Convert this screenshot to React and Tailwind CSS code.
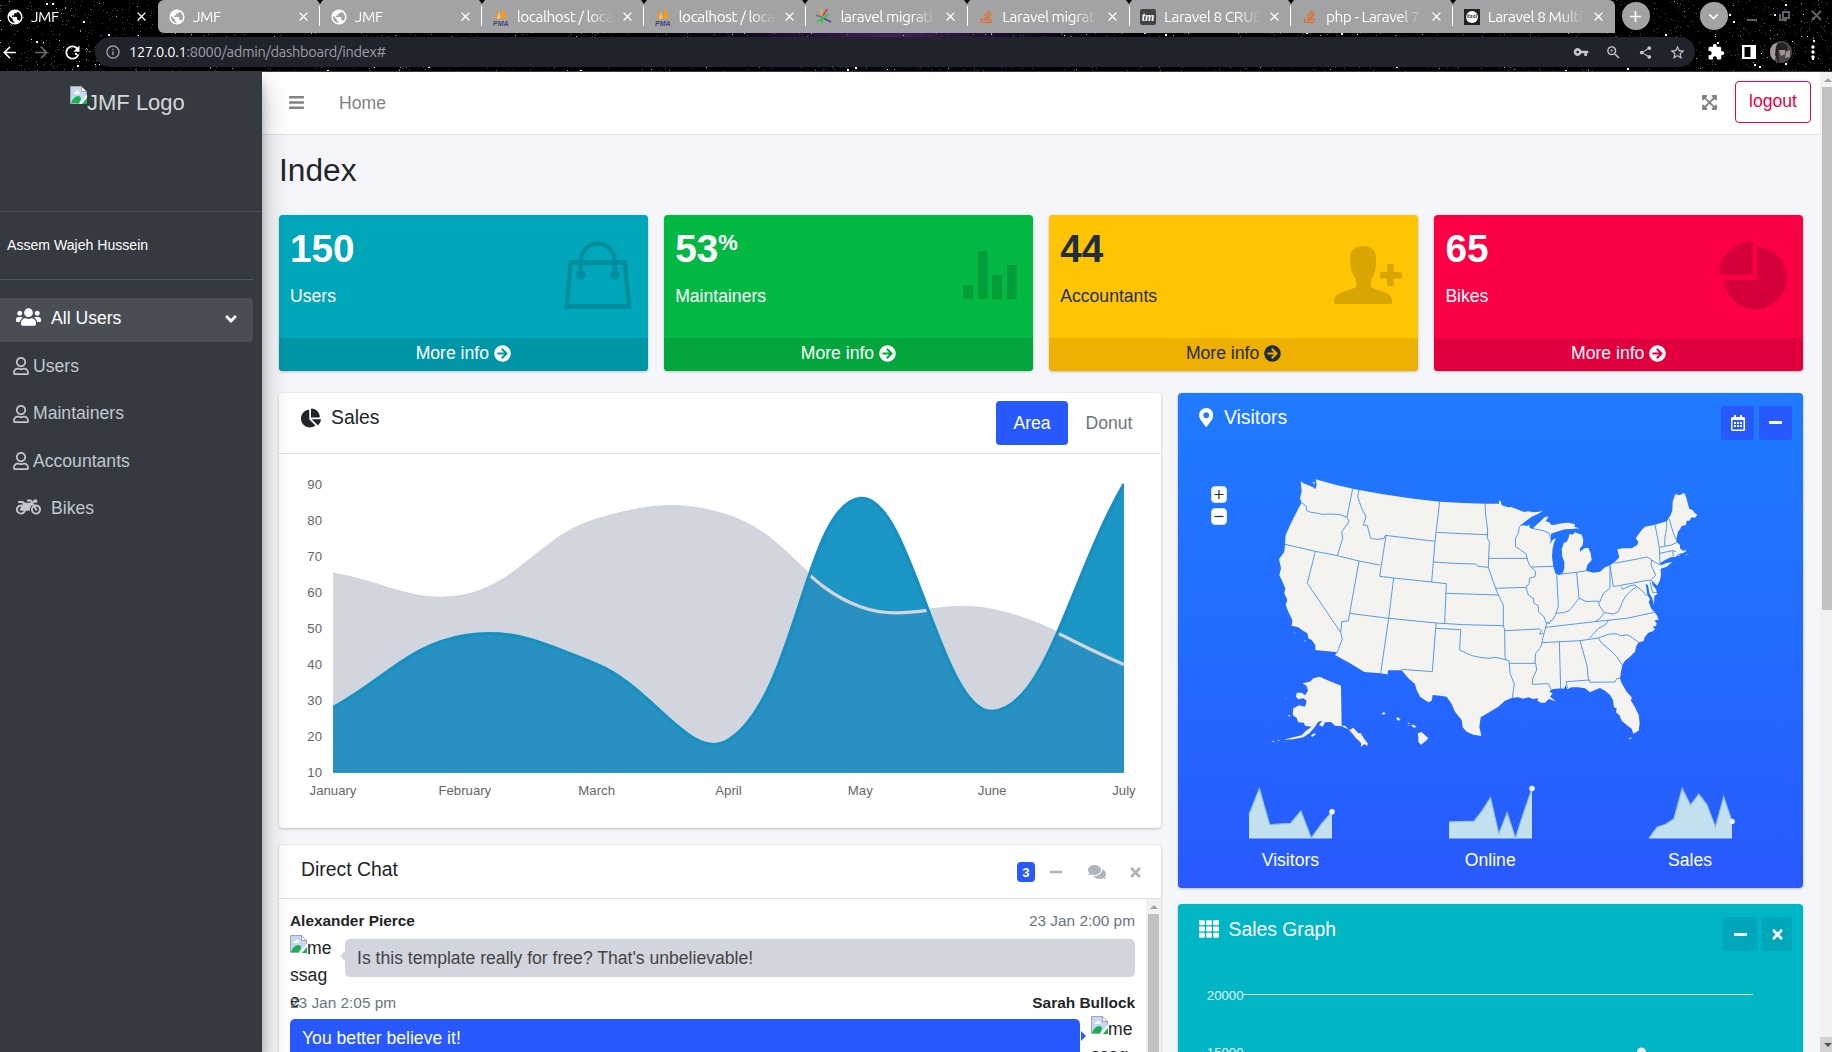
import React from "react";
import {
  FaUsers, FaRegUser, FaMotorcycle, FaAngleDown, FaBars, FaExpandArrowsAlt, FaArrowCircleRight,
  FaChartPie, FaMapMarkerAlt, FaRegCalendarAlt, FaMinus, FaTimes, FaTh, FaComments, FaStackOverflow,
} from "react-icons/fa";
import {
  MdArrowBack, MdArrowForward, MdRefresh, MdInfoOutline, MdVpnKey, MdZoomIn, MdShare, MdStarBorder,
  MdExtension, MdClose, MdAdd, MdPublic, MdMoreVert, MdKeyboardArrowDown,
} from "react-icons/md";

/* ---------- browser chrome ---------- */

function makeStars() {
  let seed = 7;
  const rnd = () => {
    seed = (seed * 1103515245 + 12345) % 2147483648;
    return seed / 2147483648;
  };
  const tones = ["#ffffff", "#9fb4c4", "#5c6670", "#3a4450", "#2c3a44", "#1f4a48", "#444a55"];
  return Array.from({ length: 4200 }, () => {
    const x = Math.floor(rnd() * 1832);
    const y = Math.floor(rnd() * 71);
    const k = rnd();
    const t = k < 0.05 ? 0 : k < 0.13 ? 1 : 2 + Math.floor(rnd() * 5);
    return { x, y, s: k < 0.03 ? 2 : 1, c: tones[t] };
  });
}
const STARS = makeStars();

function Starfield() {
  return (
    <svg className="absolute inset-0" width="1832" height="71">
      <defs>
        <radialGradient id="nebula">
          <stop offset="0" stopColor="#5a2a78" stopOpacity="0.8" />
          <stop offset="1" stopColor="#1a1040" stopOpacity="0" />
        </radialGradient>
      </defs>
      <ellipse cx="890" cy="38" rx="260" ry="40" fill="url(#nebula)" />
      {STARS.map((s, i) => (
        <rect key={i} x={s.x} y={s.y} width={s.s} height={s.s} fill={s.c} />
      ))}
    </svg>
  );
}

const PmaIcon = () => (
  <svg width="16" height="18" viewBox="0 0 16 18">
    <path d="M5 1 L6 10 L1 11 Q4 7 5 1Z M9 0 Q13 5 14 10 L8 10 Q9.500 5 9 0Z" fill="#f89c0e" />
    <path d="M6.500 3 L7.500 10.500 L4 11Z" fill="#fbc17b" />
    <text x="0" y="17.500" fontSize="7" fontWeight="700" fontStyle="italic" fill="#4b3f7d" fontFamily="Liberation Sans, sans-serif" textLength="15.500">PMA</text>
  </svg>
);
const LaravelIoIcon = () => (
  <svg width="16" height="16" viewBox="0 0 16 16" fill="none" strokeWidth="1.700">
    <path d="M5 8 L0 6" stroke="#9b59b6" />
    <path d="M6 7 L5 0" stroke="#f1b62e" />
    <path d="M7 7 L11 0" stroke="#e8315b" />
    <path d="M5 8 L15 13" stroke="#6b3fa0" />
    <path d="M1 13 L13 5 M6 8 L6 14" stroke="#2ecc40" />
  </svg>
);
const TmIcon = () => (
  <span className="flex h-4 w-4 items-center justify-center rounded-[2px] bg-[#444] text-[12px] font-bold italic leading-none text-white [font-family:'Liberation_Serif',serif]">tm</span>
);
const BadgeIcon = () => (
  <span className="flex h-4 w-4 items-center justify-center bg-[#222]">
    <span className="flex h-3 w-3 items-center justify-center rounded-full bg-white text-[5px] font-bold leading-none text-[#222]">itsol</span>
  </span>
);
const Globe = () => <MdPublic size={18} className="-m-px text-white" />;
const So = () => <FaStackOverflow size={15} className="text-[#f2641c]" />;

const TABS = [
  ["JMF", Globe], ["JMF", Globe], ["localhost / loca", PmaIcon], ["localhost / loca", PmaIcon],
  ["laravel migrati", LaravelIoIcon], ["Laravel migrat", So], ["Laravel 8 CRUD", TmIcon],
  ["php - Laravel 7", So], ["Laravel 8 Multi", BadgeIcon],
];

function TabInner({ label, Icon }) {
  return (
    <>
      <span className="flex w-4 shrink-0 items-center justify-center"><Icon /></span>
      <span className="ml-2 w-[98px] shrink-0 overflow-hidden whitespace-nowrap text-[15.400px] leading-[22px] tracking-[-0.450px] text-white [mask-image:linear-gradient(to_right,#000_74%,transparent_99%)]">{label}</span>
      <MdClose size={15} className="ml-[5px] shrink-0 text-white" />
    </>
  );
}

function BrowserChrome() {
  return (
    <header className="relative h-[72px] shrink-0 overflow-hidden bg-black [font-family:Ubuntu,'Open_Sans',sans-serif]">
      <Starfield />
      <div className="relative flex h-[33px]">
        <div className="flex w-[158px] items-center pl-[7px]">
          <TabInner label="JMF" Icon={Globe} />
        </div>
        <div className="flex h-[33px] overflow-hidden rounded-bl-[6px] rounded-tl-[6px] rounded-tr-[6px] bg-[#a2a3a4]">
          {TABS.map(([label, Icon], i) => (
            <div key={i} className="relative flex w-[161.850px] items-center pl-[11px]">
              <TabInner label={label} Icon={Icon} />
              {i < 8 && <span className="absolute right-[-0.5px] top-[6px] h-5 w-px bg-white" />}
              {i < 8 && <span className="absolute -right-[3px] top-0 border-x-[3px] border-t-4 border-x-transparent border-t-black" />}
            </div>
          ))}
        </div>
        <div className="ml-[7px] mt-0.5 flex h-7 w-7 items-center justify-center rounded-full bg-[#a2a3a4] text-white"><MdAdd size={19} /></div>
        <div className="ml-[50px] mt-0.5 flex h-7 w-7 items-center justify-center rounded-full bg-[#a2a3a4] text-white"><MdKeyboardArrowDown size={19} /></div>
        <svg className="ml-3" width="92" height="32" fill="none" stroke="#5e6266" strokeWidth="2">
          <path d="M7 20H17M40 14V20H47M43 12H49V18H43ZM72 11L81 20M81 11L72 20" />
        </svg>
      </div>
      <div className="relative mt-1 flex h-[30px] items-center text-white">
        <div className="flex w-[95px] items-center">
          <MdArrowBack size={19} className="shrink-0" />
          <MdArrowForward size={19} className="ml-[13px] shrink-0 text-[#6d6d6d]" />
          <MdRefresh size={21} className="ml-[11px] shrink-0" />
        </div>
        <div className="flex h-[30px] w-[1600px] items-center rounded-full bg-[#20232c] pl-[10px] pr-[9px] text-[#9aa0a6]">
          <MdInfoOutline size={16} />
          <span className="ml-[8px] text-[14.600px] leading-none tracking-[-0.300px]"><span className="text-white">127.0.0.1</span>:8000/admin/dashboard/index#</span>
          <div className="ml-auto flex items-center gap-4 text-[#c4c6c9]">
            <MdVpnKey size={16} /><MdZoomIn size={17} /><MdShare size={15} /><MdStarBorder size={17} />
          </div>
        </div>
        <MdExtension size={18} className="ml-[12px]" />
        <svg className="ml-[17px]" width="14" height="14"><path d="M0 0H14V14H0Z" fill="#fff" /><path d="M2.500 2V12H8.500V2Z" fill="#000" /></svg>
        <svg className="ml-[14px]" width="22" height="22" viewBox="0 0 22 22">
          <defs><clipPath id="avatar"><circle cx="11" cy="11" r="11" /></clipPath></defs>
          <g clipPath="url(#avatar)">
            <rect width="22" height="22" fill="#4b4648" />
            <path d="M0 4L7 2V14L3 22H0Z" fill="#a09a98" />
            <path d="M6 5Q12 -2 18 6L17 9L8 9L9 22L5 14Z" fill="#232021" />
            <path d="M9 9L15 9L15 13L11 15Z" fill="#a8948e" />
            <path d="M16 11L20 9L20 16L15 17Z" fill="#9c9290" />
          </g>
        </svg>
        <MdMoreVert size={20} className="ml-[11px]" />
      </div>
      <div className="absolute inset-x-0 bottom-0 h-px bg-[#3a363c]" />
    </header>
  );
}

/* ---------- shared bits ---------- */

function BrokenImage() {
  return (
    <svg className="inline-block align-top" width="17" height="18" viewBox="0 0 17 18">
      <path d="M0.500 0.500H11.500L16.500 5.500V17.500H0.500Z" fill="#c5d7f5" stroke="#a3a6aa" />
      <path d="M11.500 0.500V5.500H16.500Z" fill="#fff" stroke="#a3a6aa" />
      <path d="M3.500 8Q3.500 6 5.500 6Q6.500 3.500 8.500 5.500Q10 6 9.500 8Z" fill="#fff" />
      <path d="M1 17Q3 11 8 10Q11 10 11 13L9 17Z" fill="#12b54a" />
      <path d="M9 18L17 8.500V12L12 18Z" fill="#fff" />
      <path d="M12 18L17 12V18Z" fill="#12b54a" />
    </svg>
  );
}

/* ---------- sidebar ---------- */

function NavItem({ children, icon, wide }) {
  return (
    <div className={wide ? "flex h-[47.400px] items-center pl-4 text-[#c2c7d0]" : "flex h-[47.400px] items-center pl-[13px] text-[#c2c7d0]"}>
      {icon}
      <span className={wide ? "ml-[10px]" : "ml-1"}>{children}</span>
    </div>
  );
}

function Sidebar() {
  return (
    <aside className="relative z-10 h-full w-[262px] shrink-0 bg-[#343a40] shadow-[0_14px_28px_rgba(0,0,0,0.25),0_10px_10px_rgba(0,0,0,0.22)]">
      <div className="flex h-[140px] border-b border-[#4b545c] pl-[70px] pt-[14px]">
        <BrokenImage />
        <span className="pt-[4px] text-[22px] leading-[26px] text-[#d6d8d9]">JMF Logo</span>
      </div>
      <div className="flex h-[68px] w-[253px] items-center border-b border-[#4f5962] pl-[7px] text-[14.080px] text-white">Assem Wajeh Hussein</div>
      <nav className="mt-[17.500px] w-[253px]">
        <div className="flex h-[44px] items-center rounded-r bg-[#494d54] pb-[2px] pl-4 text-white">
          <FaUsers className="-mt-[3px] h-5 w-[25px]" />
          <span className="ml-[10px]">All Users</span>
          <FaAngleDown size={18} className="ml-auto mr-[13px]" />
        </div>
        <div className="mt-px">
          <NavItem icon={<FaRegUser className="h-[18px] w-4" />}>Users</NavItem>
          <NavItem icon={<FaRegUser className="h-[18px] w-4" />}>Maintainers</NavItem>
          <NavItem icon={<FaRegUser className="h-[18px] w-4" />}>Accountants</NavItem>
          <NavItem wide icon={<FaMotorcycle className="-mt-[3px] h-5 w-[25px]" />}>Bikes</NavItem>
        </div>
      </nav>
    </aside>
  );
}

/* ---------- small boxes ---------- */

const BagIcon = () => (
  <g>
    <path fillRule="evenodd" d="M6.900 19H65L69.500 68H2.300ZM10.800 24L6.900 63H65L60.400 24Z" />
    <path d="M16.500 34V19.500A19.200 19.200 0 0 1 54.900 19.500V34H50.400V19.500A14.700 14.700 0 0 0 21 19.500V34Z" />
    <circle cx="18.800" cy="34" r="4.800" /><circle cx="52.600" cy="34" r="4.800" />
  </g>
);
const BarsIcon = () => <path d="M16.300 44h10v14.300h-10zM31.100 10h9.500v48.300h-9.500zM45 34h10v24.300H45zM60 24h9.500v34.300H60z" />;
const PersonIcon = () => (
  <path d="M31 5C38 5 44 9 44 16C44 19 43.500 21 44 23C43.500 28 42.500 33 40 37C38.500 40 38.500 43 39 46C45 50 58 50.500 60.200 58V63H2.200V58C4.500 50.500 18 50 24 46C24.500 43 24.500 40 23 37C20 33 19 28 18.200 23C18.600 21 18 19 18 16C18 9 24 5 31 5ZM55.200 23H61.800V31H69.900V37.600H61.800V45H55.200V37.600H48.200V31H55.200Z" />
);
const PieIcon = () => <path d="M36 0.300V33.700H1.900A34 34 0 0 1 36 0.300ZM40.200 5.400A31.400 31.400 0 1 1 7 39H40.200Z" />;

const BOXES = [
  { n: "150", label: "Users", box: "bg-[#00a7bb] text-white", foot: "bg-[#0096a8]", Icon: BagIcon },
  { n: "53", sup: "%", label: "Maintainers", box: "bg-[#03b944] text-white", foot: "bg-[#02a63d]", Icon: BarsIcon },
  { n: "44", label: "Accountants", box: "bg-[#ffc404] text-[#1f2d3d]", foot: "bg-[#edb003]", Icon: PersonIcon },
  { n: "65", label: "Bikes", box: "bg-[#fb0044] text-white", foot: "bg-[#e1003d]", Icon: PieIcon },
];

function SmallBox({ n, sup, label, box, foot, Icon }) {
  return (
    <div className={`relative flex h-[156px] flex-col overflow-hidden rounded-[4px] shadow-[0_0_1px_rgba(0,0,0,0.13),0_1px_3px_rgba(0,0,0,0.2)] ${box}`}>
      <div className="flex-1 px-[11px] pt-[11px]">
        <div className="text-[38.720px] font-bold leading-[46px]">
          {n}{sup && <sup className="relative -top-[12px] align-baseline text-[22px] leading-none">{sup}</sup>}
        </div>
        <div className="mt-[11px] leading-[26px]">{label}</div>
      </div>
      <div className={`flex h-[33px] items-center justify-center pb-[2px] ${foot}`}>
        More info<FaArrowCircleRight size={17} className="ml-[5px]" />
      </div>
      <svg className="absolute right-[16px] top-[26px]" width="70" height="70" viewBox="0 0 70 70" opacity="0.15"><Icon /></svg>
    </div>
  );
}

/* ---------- area chart ---------- */

const X0 = 54, X1 = 845, YT = 30, YB = 318.7;
const BLUE = [28, 48, 40, 19, 86, 27, 90];
const GRAY = [65, 59, 80, 81, 56, 55, 40];
const MONTHS = ["January", "February", "March", "April", "May", "June", "July"];

function spline(values) {
  const p = values.map((v, i) => [X0 + ((X1 - X0) * i) / 6, YB - ((v - 10) / 80) * (YB - YT)]);
  const cap = (y) => Math.max(YT, Math.min(YB, y));
  const ctrl = p.map((c, i) => {
    const a = p[i - 1] || c, b = p[i + 1] || c;
    const d1 = Math.hypot(c[0] - a[0], c[1] - a[1]), d2 = Math.hypot(b[0] - c[0], b[1] - c[1]);
    const f1 = (0.4 * d1) / (d1 + d2), f2 = (0.4 * d2) / (d1 + d2);
    return [
      [c[0] - f1 * (b[0] - a[0]), cap(c[1] - f1 * (b[1] - a[1]))],
      [c[0] + f2 * (b[0] - a[0]), cap(c[1] + f2 * (b[1] - a[1]))],
    ];
  });
  let d = `M${p[0]}`;
  for (let i = 1; i < p.length; i++) d += `C${ctrl[i - 1][1]} ${ctrl[i][0]} ${p[i]}`;
  return d;
}

function AreaChart() {
  const blue = spline(BLUE), gray = spline(GRAY);
  const close = `L${X1},${YB}L${X0},${YB}Z`;
  return (
    <svg width="882" height="370" className="block" fontFamily="Liberation Sans, sans-serif" fontSize="13.200" fill="#666">
      <defs>
        <clipPath id="grayArea"><path d={gray + close} /></clipPath>
        <clipPath id="plot"><rect x={X0} y={YT - 2} width={X1 - X0} height={YB - YT + 3} /></clipPath>
      </defs>
      <g clipPath="url(#plot)">
        <path d={gray + close} fill="#d2d5de" />
        <path d={blue + close} fill="#1b96c5" />
        <path d={blue + close} fill="#2991c2" clipPath="url(#grayArea)" />
        <path d={gray} fill="none" stroke="#d2d5de" strokeWidth="3.300" />
        <path d={blue} fill="none" stroke="#1690c0" strokeWidth="3.300" />
      </g>
      {[90, 80, 70, 60, 50, 40, 30, 20, 10].map((v, i) => (
        <text key={v} x="43" y={YT + i * 36.080 + 4.500} textAnchor="end">{v}</text>
      ))}
      {MONTHS.map((m, i) => (
        <text key={m} x={X0 + ((X1 - X0) * i) / 6} y="341" textAnchor="middle">{m}</text>
      ))}
    </svg>
  );
}

const CARD = "overflow-hidden rounded-[4px] shadow-[0_0_1px_rgba(0,0,0,0.13),0_1px_3px_rgba(0,0,0,0.2)]";

function SalesCard() {
  return (
    <section className={`h-[435.500px] bg-white ${CARD}`}>
      <div className="flex h-[61px] border-b border-[#dcdddf] pl-[22px] pr-[11px] pt-2">
        <h3 className="mt-px flex h-8 items-center text-[19.360px]"><FaChartPie size={20} className="mr-[10px]" />Sales</h3>
        <div className="ml-auto flex h-11">
          <span className="flex w-[72px] items-center justify-center rounded-[4px] bg-[#2859ff] text-white">Area</span>
          <span className="flex w-[82px] items-center justify-center text-[#6c757d]">Donut</span>
        </div>
      </div>
      <AreaChart />
    </section>
  );
}

/* ---------- chat ---------- */

function ChatAvatar() {
  return (
    <div className="h-11 w-11 shrink-0 overflow-visible break-all leading-[26.400px]">
      <BrokenImage />me<br />ssag<br />e
    </div>
  );
}

function ChatCard() {
  return (
    <section className={`mt-[16.500px] h-[330px] bg-white ${CARD}`}>
      <div className="flex h-[54px] items-center border-b border-[#dcdddf] pl-[22px] pr-[18px]">
        <h3 className="pb-[3px] text-[19.360px]">Direct Chat</h3>
        <div className="ml-auto flex items-center pt-[2px] text-[#adb5bd]">
          <span className="flex h-5 w-[18px] items-center justify-center rounded-[4px] bg-[#2859ff] text-[13.200px] font-bold text-white">3</span>
          <FaMinus size={14} className="ml-[14px]" />
          <FaComments size={18} className="ml-[25px]" />
          <FaTimes size={15} className="ml-[22px]" />
        </div>
      </div>
      <div className="flex h-[276px]">
        <div className="flex-1 px-[11px] pt-[10.500px]">
          <div className="flex h-[23px] items-center justify-between text-[15.400px]">
            <b className="text-[#212529]">Alexander Pierce</b><span className="text-[#697582]">23 Jan 2:00 pm</span>
          </div>
          <div className="mt-[3px] flex h-11">
            <ChatAvatar />
            <div className="relative ml-[11px] mt-[3.500px] flex h-[38.500px] flex-1 items-center rounded-[5px] bg-[#d2d5de] px-3 text-[#444]">
              <span className="absolute -left-[5.500px] top-[12px] border-y-[5.500px] border-r-[5.500px] border-y-transparent border-r-[#d2d5de]" />
              Is this template really for free? That's unbelievable!
            </div>
          </div>
          <div className="mt-[11.500px] flex h-[23px] items-center justify-between text-[15.400px]">
            <span className="text-[#697582]">23 Jan 2:05 pm</span><b className="text-[#212529]">Sarah Bullock</b>
          </div>
          <div className="mt-[2px] flex h-11">
            <div className="relative mr-[11px] mt-[3px] flex h-[38.500px] flex-1 items-center rounded-[5px] bg-[#2859ff] px-3 text-white">
              <span className="absolute -right-[5.500px] top-[12px] border-y-[5.500px] border-l-[5.500px] border-y-transparent border-l-[#2859ff]" />
              You better believe it!
            </div>
            <ChatAvatar />
          </div>
        </div>
        <div className="flex w-[15px] flex-col items-center bg-[#f1f1f1]">
          <span className="mb-[5px] mt-[6px] border-x-4 border-b-4 border-x-transparent border-b-[#a3a3a3]" />
          <span className="w-[11px] flex-1 bg-[#c1c1c1]" />
        </div>
      </div>
    </section>
  );
}

/* ---------- map ---------- */

const MAINLAND =
  "M152,63L160,70 175,76 190,82 196,88 200,75 197,58 250,73 308,86 327,90 400,103 480,115 569,125 640,129 705,131 747,131 747,121 752,124 755,136 775,142 783,141 800,147 822,156 835,154 850,157 868,155 880,151 868,160 845,170 825,185 808,199 820,196 830,198 838,194 838,202 847,207 858,196 872,184 883,172 896,169 887,184 897,187 905,195 915,194 935,190 955,188 975,193 974,201 988,205 965,207 945,208 930,212 915,217 903,222 903,240 898,255 908,240 918,234 912,248 908,265 906,290 910,320 916,340 926,346 938,340 943,325 943,305 937,290 935,268 942,248 950,246 957,230 958,222 968,224 975,217 995,224 1000,240 998,255 990,266 990,275 1003,265 1015,263 1022,280 1025,300 1012,315 1008,332 1030,338 1050,335 1065,322 1082,315 1095,305 1108,292 1106,285 1102,268 1120,265 1145,265 1162,255 1165,245 1157,235 1175,210 1185,200 1215,194 1250,184 1255,176 1262,165 1267,150 1268,125 1276,102 1288,106 1303,99 1308,110 1318,147 1328,150 1333,158 1342,164 1335,173 1325,172 1318,182 1310,182 1308,195 1295,198 1290,208 1284,215 1280,235 1279,245 1290,255 1290,265 1298,272 1306,272 1300,265 1309,273 1300,279 1285,282 1278,290 1262,292 1245,300 1230,310 1232,316 1250,309 1267,306 1250,320 1232,326 1233,345 1230,360 1222,377 1212,368 1205,362 1208,375 1218,388 1222,402 1213,408 1212,436 1207,415 1198,400 1194,375 1187,372 1190,390 1192,405 1200,418 1196,425 1203,445 1213,456 1220,465 1226,478 1213,482 1220,490 1218,498 1208,500 1215,508 1208,514 1195,518 1185,530 1180,544 1166,547 1158,560 1155,575 1140,590 1125,602 1117,615 1113,635 1110,655 1115,670 1130,695 1145,712 1143,722 1155,742 1166,765 1169,790 1166,812 1150,821 1145,806 1130,795 1115,782 1108,765 1098,757 1100,745 1092,742 1089,720 1080,705 1065,692 1050,684 1035,690 1020,697 1005,685 985,682 965,682 952,688 946,676 942,686 932,685 905,688 898,695 908,700 900,710 918,724 905,720 897,716 885,728 872,728 862,722 865,715 850,717 835,712 820,716 805,712 787,713 765,722 745,740 720,755 692,772 688,800 694,828 670,824 650,815 638,802 635,780 615,755 605,732 590,710 570,707 548,705 545,722 535,727 510,710 500,690 495,672 475,655 455,631 414,631 413,643 392,640 343,636 300,610 255,585 262,577 196,570 196,555 185,540 175,535 172,520 160,513 145,502 125,497 127,480 115,455 107,435 112,420 103,400 106,385 88,345 93,325 87,298 103,275 105,253 107,225 125,185 148,140 155,128 150,115 155,95Z";
const ALASKA =
  "M273,677L275,797 285,797 298,810 310,803 325,820 332,820 343,837 353,850 352,858 343,852 333,861 333,848 318,835 305,818 295,808 275,799 255,797 243,786 225,787 218,800 207,795 217,782 205,785 195,800 185,812 178,820 160,832 130,838 100,839 130,832 155,826 168,812 185,800 165,797 162,788 145,787 140,774 128,765 130,745 147,736 165,740 170,722 160,715 145,718 138,710 140,698 155,698 165,706 174,692 170,678 158,670 180,665 190,655 210,650 222,656 240,664 255,670Z";
const BITS =
  "M396,760l6,-4 5,6 -9,2zM438,775l6,-3 8,7 -8,3zM472,788l8,1 -5,3zM474,796l4,-1 0,4zM483,795l8,-1 9,7 -9,2zM503,820l12,-4 20,19 -8,8 -14,11 -8,-8 0,-14zM376,766l6,-1zM183,826l10,-6 5,3 -12,8zM113,765l7,0 -2,6zM105,711l5,8 -2,-5zM64,844l10,-1 -4,4zM80,842l8,-2 0,3zM130,516l8,4 -6,-1zM140,516l5,2zM163,540l4,8 -1,-7zM160,557l6,3zM187,66l8,1 -2,6zM1134,838l10,-6 0,4zM1160,828l6,-6zM1229,492l3,3zM1280,285l8,-2 1,4zM1306,284l6,-2 -1,4zM82,745l2,3z";
const BORDERS =
  "M155,128L168,138 170,152 183,157 205,160 215,163 245,162 270,164 291,172M308,86L291,172 297,184 288,198 275,215 278,235 262,287M105,253L196,274 262,287 327,303 389,315M327,90L323,110 335,145 348,170 340,195 352,197 362,235 380,238 402,236 405,227M408,226L389,349M405,226L480,235 555,244M569,125L555,244 545,366M389,349L431,354 545,366 589,371M561,217L635,221 713,224M705,131L707,165 713,210 712,235 718,245 716,295M552,306L610,310 675,312 685,319 715,322M715,295L832,295M716,295L715,322 728,360 737,385 745,405 755,425 760,435 760,497 764,510 765,590 768,600M735,385L828,382M589,400L745,405M589,371L584,490M431,354L416,475 392,640M196,274L172,370 272,517M327,303L299,460 295,483 275,485 273,510 272,517 277,537 266,565 262,577M299,460L416,475 559,489 640,494 760,497M559,489L557,505 632,509 629,570 650,580 670,588 695,593 720,595 735,592 750,595 777,602M557,505L547,635 455,628M764,512L868,507 875,512 868,522 880,520M777,602L778,610 857,610M778,610L780,640 793,672 787,713M857,610L860,630 848,655 847,673 895,671 903,688M808,199L805,220 796,235 797,260 812,270 828,282 834,305 840,318 857,335 855,350 838,355 838,370 828,382 835,405 850,415 852,430 865,437 865,455 882,470 888,488 900,490M845,321L910,319M845,205L880,212 898,220 903,240M920,343L924,420 925,440 918,460 908,480 890,490M926,343L980,337 1008,332M980,337L987,415M918,460L940,458 958,452 975,430 987,415 1010,425 1040,423 1050,425 1060,400 1080,385 1080,317M1080,317L1090,380 1197,360 1207,362M1093,310L1192,291 1205,300 1203,315 1217,345 1205,358M1205,300L1230,315M1045,425L1050,440 1063,458 1090,462 1105,455 1120,420 1130,405 1145,390 1160,380 1175,390 1190,408M1113,380L1118,388 1140,377 1155,375 1165,385M1063,458L1050,475 1035,485M887,502L1035,485 1130,475 1213,457M890,490L885,510 878,535 876,550 870,565 857,580 855,610M876,548L930,545 990,542 1045,534M1076,480L1065,495 1045,505 1030,522 1018,535M1045,534L1075,523 1100,521 1112,527 1135,525 1166,547M1045,534L1055,550 1080,570 1100,590 1117,615M990,542L1012,620 1013,645 1018,663M928,545L932,685M948,665L1018,660 1020,667 1095,666 1100,656 1110,655M948,665L952,684M1215,194L1222,230 1228,262 1230,310M1250,184L1250,205 1245,230 1244,257M1258,177L1270,220 1280,242M1228,262L1265,255 1280,247M1228,280L1268,272 1278,275M1268,272L1270,290M1200,365L1208,398 1222,398";

function UsMap() {
  return (
    <svg width="460" height="300" viewBox="0 0 1380 900">
      <g fill="#f4f3f0" strokeLinejoin="round">
        <path d={MAINLAND} /><path d={ALASKA} /><path d={BITS} />
      </g>
      <path d={BORDERS} fill="none" stroke="#4a95e6" strokeWidth="2.800" strokeLinejoin="round" />
    </svg>
  );
}

function Spark({ data, label }) {
  const min = Math.min(...data), max = Math.max(...data);
  const pts = data.map((v, i) => [3 + (i * 83) / (data.length - 1), 54 - ((v - min) / (max - min)) * 49.500]);
  const line = pts.join(" ");
  const end = pts[pts.length - 1];
  return (
    <div className="flex flex-col items-center text-white">
      <svg width="89" height="57">
        <polygon points={`${line} 86,54.500 3,54.500`} fill="#c3e0ee" />
        <polyline points={line} fill="none" stroke="#92c1dc" strokeWidth="1.200" />
        <circle cx={end[0]} cy={end[1]} r="2.800" fill="#ebf4f9" />
      </svg>
      <span className="mt-[6px] leading-[26px]">{label}</span>
    </div>
  );
}

function ZoomButton({ children }) {
  return (
    <span className="flex h-[17px] w-4 items-center justify-center rounded-[4px] border border-[#d9e2ea] bg-white">
      <svg width="10" height="10" stroke="#292929" strokeWidth="1.200">{children}</svg>
    </span>
  );
}

function VisitorsCard() {
  return (
    <section className={`h-[495px] bg-gradient-to-b from-[#1f7bff] to-[#2859ff] text-white ${CARD}`}>
      <div className="flex h-[67px] pl-[22px] pr-[11px] pt-[13px]">
        <h3 className="mt-px flex h-[22px] items-center text-[19.360px]"><FaMapMarkerAlt className="-ml-px mr-[11px] h-[19px] w-[14.500px]" />Visitors</h3>
        <div className="ml-auto flex gap-[5px]">
          <span className="flex h-[34px] w-[33px] items-center justify-center rounded-[3px] bg-[#2859ff]"><FaRegCalendarAlt size={16} /></span>
          <span className="flex h-[34px] w-[33px] items-center justify-center rounded-[3px] bg-[#2859ff]"><FaMinus size={15} /></span>
        </div>
      </div>
      <div className="flex pl-[33px]">
        <div className="mt-[26px] flex w-[39px] flex-col gap-[5px]">
          <ZoomButton><path d="M0.500 5.500H9.500M5 1V10" /></ZoomButton>
          <ZoomButton><path d="M0.500 5.500H9.500" /></ZoomButton>
        </div>
        <UsMap />
      </div>
      <div className="mt-[24px] grid grid-cols-3 px-[13px]">
        <Spark label="Visitors" data={[1000, 1200, 920, 927, 931, 1027, 819, 930, 1021]} />
        <Spark label="Online" data={[515, 519, 520, 522, 652, 810, 370, 627, 319, 630, 921]} />
        <Spark label="Sales" data={[15, 19, 20, 22, 33, 27, 31, 27, 19, 30, 21]} />
      </div>
    </section>
  );
}

function SalesGraphCard() {
  return (
    <section className={`mt-[16.500px] h-[400px] bg-[#00b5c4] text-white ${CARD}`}>
      <div className="flex h-[67px] pl-[22px] pr-[11px] pt-[13px]">
        <h3 className="mt-px flex h-[22px] items-center text-[19.360px]"><FaTh size={20} className="-ml-px mr-[10px]" />Sales Graph</h3>
        <div className="ml-auto flex gap-[5px]">
          <span className="flex h-[34px] w-[34px] items-center justify-center rounded-[3px] bg-[#00a7bb]"><FaMinus size={15} /></span>
          <span className="flex h-[34px] w-[30px] items-center justify-center rounded-[3px] bg-[#00a7bb]"><FaTimes size={15} /></span>
        </div>
      </div>
      <svg width="625" height="250" fontFamily="Liberation Sans, sans-serif" fontSize="13.200" fill="#e4f6f8">
        <text x="65.500" y="28.500" textAnchor="end">20000</text>
        <path d="M65.500 23.500H575" stroke="#efefef" />
        <text x="65.500" y="86" textAnchor="end">15000</text>
        <circle cx="463.500" cy="81" r="4.500" fill="#efefef" />
      </svg>
    </section>
  );
}

/* ---------- page ---------- */

function Content() {
  return (
    <div className="flex h-full w-[1558px] shrink-0 flex-col bg-[#f4f6f9]">
      <div className="flex h-[62.700px] shrink-0 items-center border-b border-[#dee2e6] bg-white pl-[26px] pr-[9px] text-[#808284]">
        <FaBars size={17} />
        <span className="ml-[34px]">Home</span>
        <FaExpandArrowsAlt size={17} className="ml-auto" />
        <span className="-mt-[2px] ml-[17px] flex h-[42px] w-[76px] items-center justify-center rounded-[4px] border border-[#f0004a] pb-[2px] text-[#f0003f]">logout</span>
      </div>
      <h1 className="ml-[17px] mt-4 h-[64.300px] shrink-0 text-[31.680px] leading-[38px] text-[#212529]">Index</h1>
      <div className="grid shrink-0 grid-cols-4 gap-[16.500px] px-[17px]">
        {BOXES.map((b) => <SmallBox key={b.label} {...b} />)}
      </div>
      <div className="mt-[22px] flex gap-[16.500px] px-[17px]">
        <div className="w-[882px] text-[#212529]"><SalesCard /><ChatCard /></div>
        <div className="flex-1"><VisitorsCard /><SalesGraphCard /></div>
      </div>
    </div>
  );
}

export default function App() {
  return (
    <div className="flex h-[1052px] w-[1832px] flex-col overflow-hidden text-[17.600px] leading-normal [font-family:'Liberation_Sans',Arial,sans-serif]">
      <BrowserChrome />
      <div className="flex h-[980px] overflow-hidden">
        <Sidebar />
        <Content />
        <div className="flex w-[15px] shrink-0 flex-col items-center bg-[#f1f1f1]">
          <span className="mb-[5px] mt-[6px] border-x-4 border-b-4 border-x-transparent border-b-[#a3a3a3]" />
          <span className="h-[523px] w-[11px] bg-[#c1c1c1]" />
          <span className="mt-auto flex h-[15px] w-full items-center justify-center bg-[#d2d2d2]">
            <span className="border-x-4 border-t-4 border-x-transparent border-t-[#505050]" />
          </span>
        </div>
      </div>
    </div>
  );
}
